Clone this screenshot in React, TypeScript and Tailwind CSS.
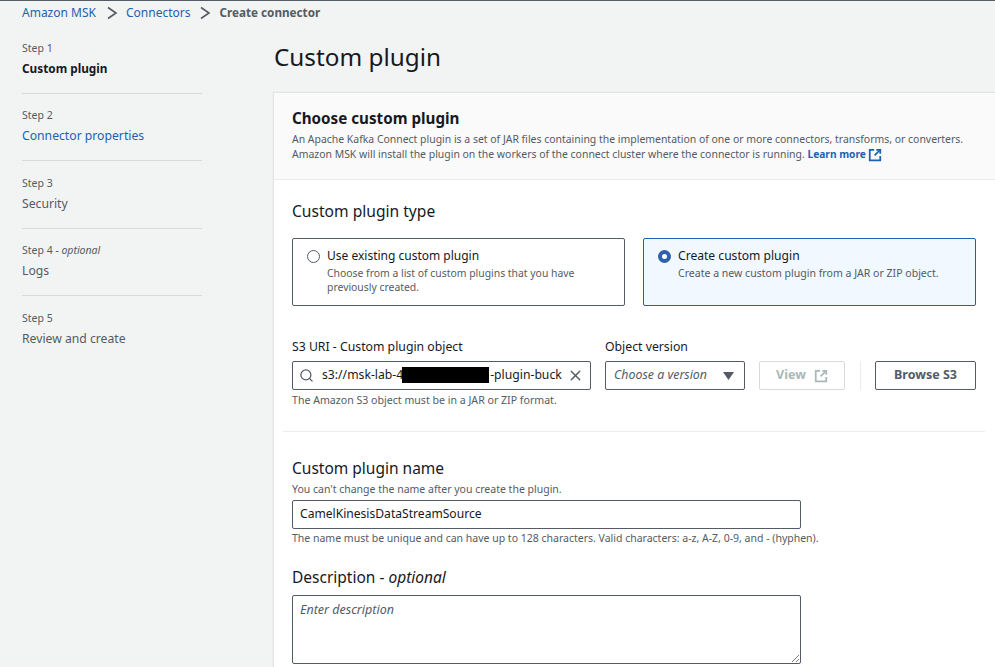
import { Search, X } from "lucide-react";

const ExternalIcon = ({ color = "#0972d3", size = 14 }: { color?: string; size?: number }) => (
  <svg width={size} height={size} viewBox="0 0 16 16" fill="none" stroke={color} strokeWidth="2" className="inline-block">
    <path d="M7 2H2v12h12V9" />
    <path d="M9.5 2H14v4.5" />
    <path d="M14 2L7.5 8.5" />
  </svg>
);

const Chevron = () => (
  <svg width="12" height="14" viewBox="0 0 12 14" fill="none" stroke="#545b64" strokeWidth="1.6" className="shrink-0">
    <path d="M2 1.5 L10 7 L2 12.5" />
  </svg>
);

const steps = [
  { step: "Step 1", name: "Custom plugin", kind: "active", first: true },
  { step: "Step 2", name: "Connector properties", kind: "link" },
  { step: "Step 3", name: "Security", kind: "off" },
  { step: "Step 4", optional: true, name: "Logs", kind: "off" },
  { step: "Step 5", name: "Review and create", kind: "off", last: true },
];

export default function App() {
  return (
    <div
      className="h-[667px] w-[995px] overflow-hidden bg-[#f2f3f3] text-[#16191f] border-t border-[#545b64]"
      style={{ fontFamily: '"Noto Sans", "Open Sans", sans-serif' }}
    >
      <nav className="flex items-center h-[24px] pl-[22px] text-[12px] leading-[24px]">
        <span className="text-[#1d62b0]">Amazon MSK</span>
        <span className="ml-[10px] mr-[8px]"><Chevron /></span>
        <span className="text-[#1d62b0]">Connectors</span>
        <span className="ml-[9px] mr-[8px]"><Chevron /></span>
        <span className="font-bold text-[11.7px] leading-[22px] text-[#545b64] pb-[2px]">Create connector</span>
      </nav>

      <div className="flex">
        <aside className="w-[273px] shrink-0 pl-[22px] pt-[15px]">
          <ul className="w-[180px]">
            {steps.map((s) => (
              <li
                key={s.step}
                className={s.first ? "h-[53.5px] border-b border-[#d5dbdb]" : s.last ? "pt-[13.5px]" : "h-[67.5px] pt-[13.5px] border-b border-[#d5dbdb]"}
              >
                <div className="text-[10.5px] leading-[16px] text-[#545b64]">
                  {s.step}
                  {s.optional && <i> - optional</i>}
                </div>
                <div
                  className={
                    "leading-[18px] " +
                    (s.kind === "active" ? "mt-[3px] text-[11.8px] font-bold text-[#16191f]" : s.kind === "link" ? "mt-[4px] text-[12.2px] text-[#1d62b0]" : "mt-[4px] text-[12.2px] text-[#545b64]")
                  }
                >
                  {s.name}
                </div>
              </li>
            ))}
          </ul>
        </aside>

        <main className="flex-1 min-w-0">
          <h1 className="text-[24.3px] leading-[34px] font-normal pl-[1px] pt-[15px] h-[67px]">Custom plugin</h1>

          <section className="bg-white border-l border-t border-[#e4e6e6] h-[600px] shadow-[0_0_1px_#d5dbdb]">
            <header className="bg-[#fafafa] border-b border-[#eaeded] h-[87px] pl-[18px] pt-[14px]">
              <h2 className="text-[15.2px] leading-[22px] font-bold">Choose custom plugin</h2>
              <p className="text-[10.45px] leading-[15px] text-[#545b64] mt-[3px] whitespace-nowrap">
                An Apache Kafka Connect plugin is a set of JAR files containing the implementation of one or more connectors, transforms, or converters.
                <br />
                Amazon MSK will install the plugin on the workers of the connect cluster where the connector is running.{" "}
                <span className="inline-flex items-center gap-[2px] font-bold text-[10.2px] text-[#1d62b0]">
                  Learn more <ExternalIcon size={14} color="#1d62b0" />
                </span>
              </p>
            </header>

            <div className="pl-[18px] pr-[19px] pt-[20px]">
              <h3 className="text-[15.6px] leading-[22px] font-normal">Custom plugin type</h3>

              <div className="grid grid-cols-[333px_333px] gap-[18px] mt-[16px]">
                <div className="h-[68px] border border-[#545b64] rounded-[2px] pl-[14px] pt-[8px] flex gap-[6px]">
                  <span className="mt-[3px] h-[13px] w-[13px] rounded-full border border-[#545b64] bg-white shrink-0" />
                  <div className="pl-[1px]">
                    <div className="text-[12px] leading-[17px]">Use existing custom plugin</div>
                    <div className="text-[10.4px] leading-[14px] text-[#545b64] mt-[2px] w-[270px]">
                      Choose from a list of custom plugins that you have previously created.
                    </div>
                  </div>
                </div>
                <div className="h-[68px] border border-[#1d62b0] rounded-[2px] bg-[#f1f8ff] pl-[14px] pt-[8px] flex gap-[6px]">
                  <span className="mt-[3px] h-[13px] w-[13px] rounded-full border-[4px] border-[#2f62ad] bg-white shrink-0" />
                  <div className="pl-[1px]">
                    <div className="text-[12.1px] leading-[17px]">Create custom plugin</div>
                    <div className="text-[10.55px] leading-[14px] text-[#545b64] mt-[2px]">
                      Create a new custom plugin from a JAR or ZIP object.
                    </div>
                  </div>
                </div>
              </div>

              <div className="flex mt-[32px]">
                <div className="w-[299px]">
                  <label className="block text-[12.25px] leading-[17px]">S3 URI - Custom plugin object</label>
                  <div className="mt-[6px] h-[29px] w-[299px] border border-[#545b64] rounded-[2px] flex items-center pl-[6px] pr-[6px] overflow-hidden">
                    <Search size={15} color="#545b64" strokeWidth={2} className="shrink-0" />
                    <span className="ml-[8px] text-[12.2px] flex items-center whitespace-nowrap">
                      s3://msk-lab-4
                      <span className="bg-black w-[87px] h-[16px] -ml-[1px] mr-[1px]" />
                      -plugin-buck
                    </span>
                    <span className="flex-1" />
                    <X size={17} color="#545b64" strokeWidth={2} className="shrink-0" />
                  </div>
                  <p className="text-[10.6px] leading-[14px] text-[#545b64] mt-[3px] whitespace-nowrap">
                    The Amazon S3 object must be in a JAR or ZIP format.
                  </p>
                </div>

                <div className="ml-[14px] w-[140px]">
                  <label className="block text-[12.25px] leading-[17px]">Object version</label>
                  <div className="mt-[6px] h-[29px] w-[140px] border border-[#545b64] rounded-[2px] flex items-center pl-[8px] pr-[10px] justify-between">
                    <i className="text-[12.4px] text-[#545b64]">Choose a version</i>
                    <svg width="11" height="8" viewBox="0 0 11 8" fill="#545b64"><path d="M0 0h11L5.5 8z" /></svg>
                  </div>
                </div>

                <div className="ml-[14px] mt-[23px] h-[29px] w-[86px] border border-[#d5dbdb] rounded-[2px] flex items-center justify-center gap-[8px] text-[12.5px] font-bold text-[#aab7b8]">
                  View <ExternalIcon size={14} color="#aab7b8" />
                </div>

                <div className="ml-[15px] mt-[23px] h-[29px] border-l border-[#eaeded]" />

                <div className="ml-[14px] mt-[23px] h-[29px] w-[101px] border border-[#545b64] rounded-[2px] flex items-center justify-center text-[12.5px] font-bold text-[#545b64]">
                  Browse S3
                </div>
              </div>

              <hr className="-ml-[9px] -mr-[9px] mt-[24px] border-t border-[#eaeded]" />

              <h3 className="mt-[26px] text-[15.5px] leading-[20px] font-normal">Custom plugin name</h3>
              <p className="text-[10.5px] leading-[14px] text-[#545b64] mt-[4px]">You can't change the name after you create the plugin.</p>
              <div className="mt-[4px] h-[29px] w-[509px] border border-[#545b64] rounded-[2px] flex items-center pl-[7px] text-[12.1px]">
                CamelKinesisDataStreamSource
              </div>
              <p className="text-[10.5px] leading-[14px] text-[#545b64] mt-[2px] whitespace-nowrap">
                The name must be unique and can have up to 128 characters. Valid characters: a-z, A-Z, 0-9, and - (hyphen).
              </p>

              <h3 className="mt-[22px] text-[15.5px] leading-[20px] font-normal">
                Description - <i>optional</i>
              </h3>
              <div className="relative mt-[8px] h-[69px] w-[509px] border border-[#545b64] rounded-[2px] pl-[7px] pt-[5px]">
                <i className="text-[12.5px] leading-[17px] text-[#545b64] block">Enter description</i>
                <svg className="absolute right-[1px] bottom-[1px]" width="8" height="8" viewBox="0 0 8 8" stroke="#545b64" strokeWidth="0.8">
                  <path d="M1 8 L8 1 M5 8 L8 5" />
                </svg>
              </div>
            </div>
          </section>
        </main>
      </div>
    </div>
  );
}
